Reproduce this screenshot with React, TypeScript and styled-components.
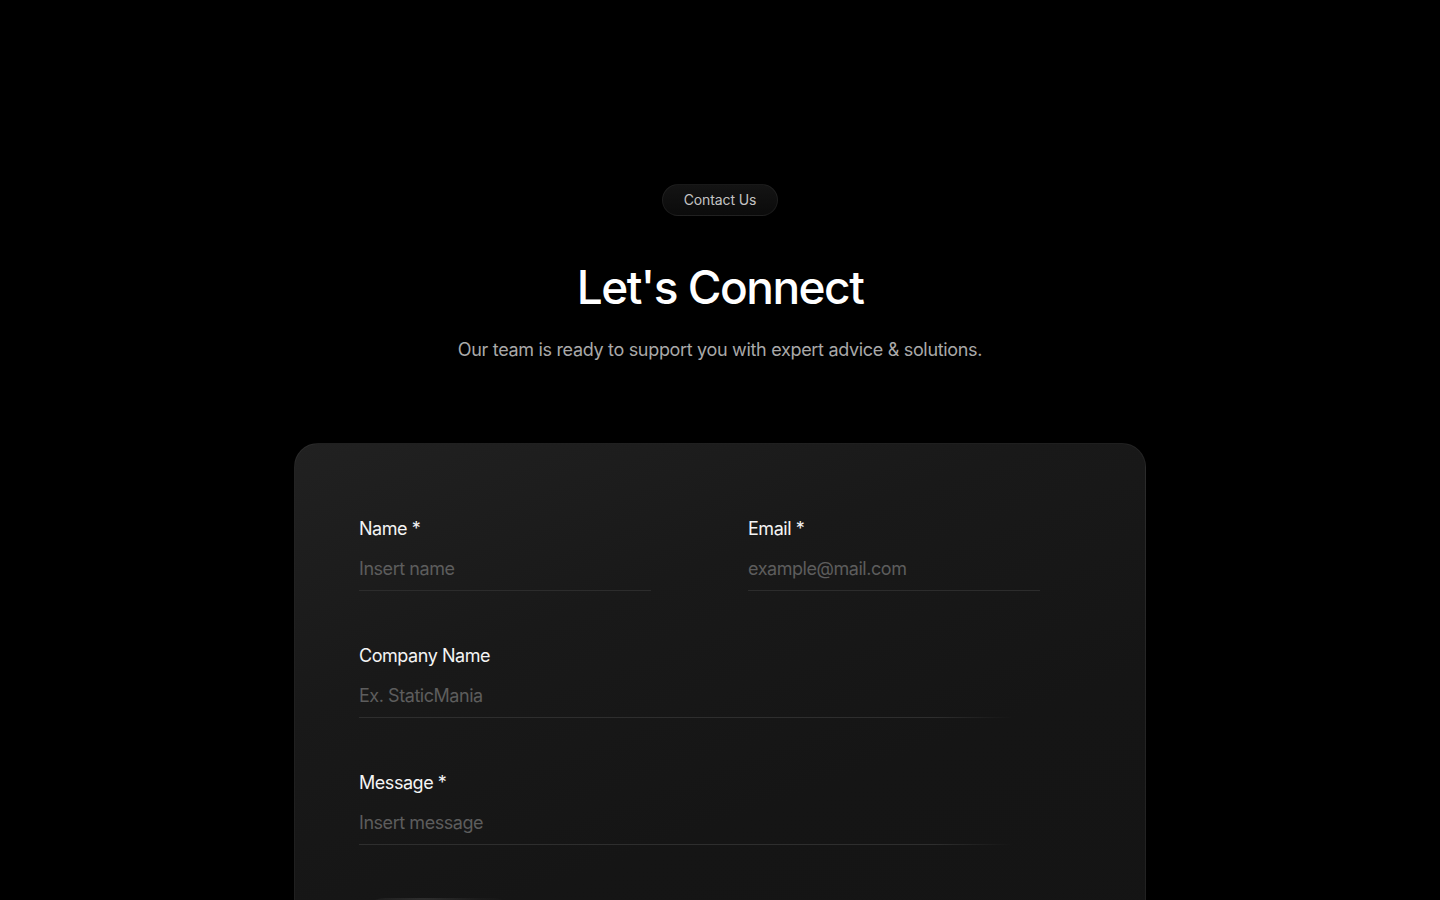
import React from "react";
import styled, { createGlobalStyle } from "styled-components";

const GlobalStyle = createGlobalStyle`
  * { box-sizing: border-box; }
  html, body { margin: 0; padding: 0; background: #000; }
  body {
    font-family: "Inter", "Noto Sans", "Liberation Sans", sans-serif;
    color: #fff;
    -webkit-font-smoothing: antialiased;
  }
`;

const Page = styled.main`
  min-height: 100vh;
  background: #000;
  padding-top: 184px;
  display: flex;
  flex-direction: column;
  align-items: center;
`;

const Header = styled.header`
  display: flex;
  flex-direction: column;
  align-items: center;
`;

const Pill = styled.span`
  display: inline-flex;
  align-items: center;
  justify-content: center;
  height: 32px;
  padding: 0 21px 2px;
  border-radius: 999px;
  background: linear-gradient(180deg, #141414 0%, #0b0b0b 100%);
  border: 1px solid rgba(255, 255, 255, 0.06);
  color: #c4c4c4;
  font-size: 14px;
  letter-spacing: -0.1px;
`;

const Title = styled.h1`
  margin: 42px 0 0;
  font-size: 46px;
  line-height: 58px;
  font-weight: 500;
  letter-spacing: -1.5px;
  color: #fff;
`;

const Subtitle = styled.p`
  margin: 20px 0 0;
  font-size: 18px;
  line-height: 28px;
  color: #a9a9a9;
  letter-spacing: -0.32px;
`;

const Card = styled.section`
  margin-top: 79px;
  width: 852px;
  border-radius: 24px;
  background: linear-gradient(160deg, #212121 0%, #191919 30%, #151515 60%, #141414 100%);
  border: 1px solid rgba(255, 255, 255, 0.05);
  padding: 73px 64px 80px;
`;

const Form = styled.form`
  width: 681px;
  display: grid;
  grid-template-columns: 292px 292px;
  column-gap: 97px;
  row-gap: 53px;
`;

const Field = styled.label<{ $full?: boolean }>`
  display: flex;
  flex-direction: column;
  gap: 16px;
  grid-column: ${(p) => (p.$full ? "1 / -1" : "auto")};
`;

const LabelText = styled.span`
  font-size: 18px;
  line-height: 24px;
  font-weight: 400;
  color: #f4f4f4;
  letter-spacing: -0.45px;
`;

const InputWrap = styled.div<{ $full?: boolean }>`
  position: relative;
  padding-bottom: 10px;
  &::after {
    content: "";
    position: absolute;
    left: 0;
    bottom: 0;
    height: 1px;
    width: ${(p) => (p.$full ? "96%" : "100%")};
    background: ${(p) =>
      p.$full
        ? "linear-gradient(90deg, #2e2e2e 0%, #2e2e2e 88%, rgba(46,46,46,0) 100%)"
        : "#2c2c2c"};
  }
`;

const Input = styled.input`
  width: 100%;
  border: none;
  outline: none;
  background: transparent;
  padding: 0;
  font-family: inherit;
  font-size: 18px;
  line-height: 24px;
  height: 24px;
  color: #ddd;
  letter-spacing: -0.45px;
  &::placeholder {
    color: #5d5d5d;
  }
`;

const Actions = styled.div`
  grid-column: 1 / -1;
  margin-top: 0;
`;

const SubmitButton = styled.button`
  height: 52px;
  width: 160px;
  border: none;
  border-radius: 999px;
  background: radial-gradient(ellipse 50% 30% at 40% 0%, #2e2e2e 0%, #1b1b1b 70%, #171717 100%);
  color: #fff;
  font-family: inherit;
  font-size: 16px;
  font-weight: 500;
`;

export default function App() {
  return (
    <>
      <GlobalStyle />
      <Page>
        <Header>
          <Pill>Contact Us</Pill>
          <Title>Let's Connect</Title>
          <Subtitle>Our team is ready to support you with expert advice &amp; solutions.</Subtitle>
        </Header>
        <Card>
          <Form onSubmit={(e) => e.preventDefault()}>
            <Field>
              <LabelText>Name *</LabelText>
              <InputWrap>
                <Input placeholder="Insert name" />
              </InputWrap>
            </Field>
            <Field>
              <LabelText>Email *</LabelText>
              <InputWrap>
                <Input placeholder="example@mail.com" />
              </InputWrap>
            </Field>
            <Field $full>
              <LabelText>Company Name</LabelText>
              <InputWrap $full>
                <Input placeholder="Ex. StaticMania" />
              </InputWrap>
            </Field>
            <Field $full>
              <LabelText>Message *</LabelText>
              <InputWrap $full>
                <Input placeholder="Insert message" />
              </InputWrap>
            </Field>
            <Actions>
              <SubmitButton type="submit">Send Message</SubmitButton>
            </Actions>
          </Form>
        </Card>
      </Page>
    </>
  );
}
